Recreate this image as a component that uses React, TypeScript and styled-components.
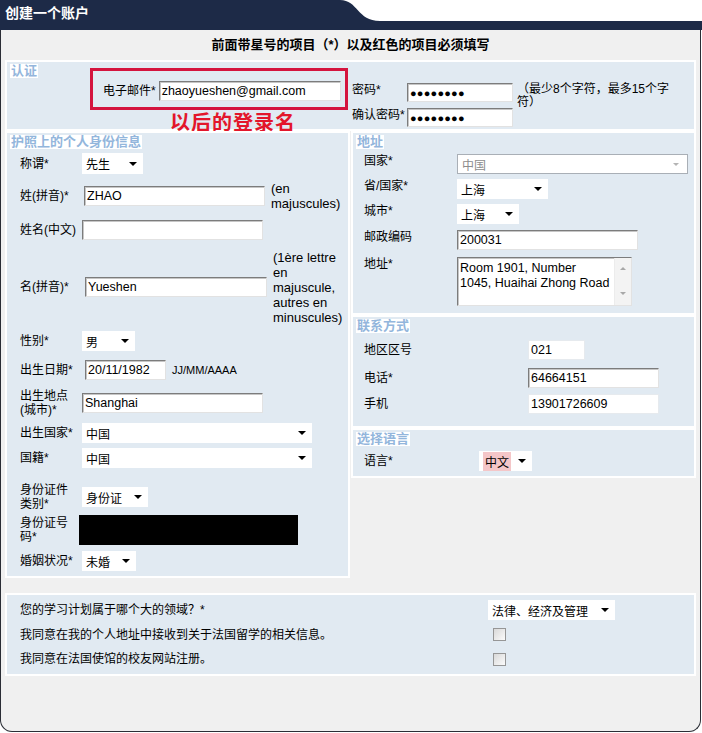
import styled, { createGlobalStyle } from "styled-components"

const navy = "#1d2a47"
const paleBlue = "#e1eaf2"

const GlobalStyle = createGlobalStyle`
    html, body {
        margin: 0;
        padding: 0;
        background: #ffffff;
    }

    body {
        font-family: "Liberation Sans", "Noto Sans CJK SC", sans-serif;
        font-size: 12px;
        color: #000;
    }

    * {
        box-sizing: border-box;
    }
`

const Page = styled.div`
    width: 702px;
    height: 733px;
    overflow: hidden;
`

const Header = styled.header`
    display: flex;
    align-items: flex-end;
    height: 30px;
`

const Tab = styled.div`
    flex: none;
    width: 340px;
    height: 30px;
    padding-left: 5px;
    background: ${navy};
    color: #fff;
    font-size: 14px;
    font-weight: bold;
    line-height: 26px;
`

const Swoop = styled.svg`
    display: block;
    flex: none;
`

const HeaderBar = styled.div`
    flex: 1;
    height: 9px;
    background: ${navy};
`

const Frame = styled.div`
    width: 701px;
    height: 702px;
    padding: 0 4px;
    background: #f0f0f0;
    border: 1px solid #2a2d35;
    border-top: none;
    border-radius: 0 0 12px 12px;
`

const Notice = styled.h1`
    margin: 0;
    height: 30px;
    font-size: 13px;
    line-height: 30px;
    text-align: center;
`

const Section = styled.section<{ $h: number }>`
    height: ${p => p.$h}px;
    background: ${paleBlue};
    border: 2px solid #fff;
`

const Legend = styled.div`
    width: fit-content;
    margin: 2px 0 0 3px;
    padding: 0 1px;
    background: #fff;
    color: #93b6dc;
    font-size: 13px;
    font-weight: bold;
    line-height: 14px;
`

// auth block

const AuthSection = styled(Section)`
    display: flex;
`

const AuthLegendCol = styled.div`
    flex: none;
    width: 83px;
`

const EmailCol = styled.div`
    flex: none;
    width: 258px;
    padding-top: 6px;
`

const Highlight = styled.div`
    display: flex;
    align-items: center;
    gap: 3px;
    height: 42px;
    padding: 4px 0 0 10px;
    border: 3px solid #d4143e;
`

const Annotation = styled.div`
    margin: 3px 0 0 80px;
    color: #e3162b;
    font-size: 20px;
    font-weight: bold;
    line-height: 20px;
    letter-spacing: 1px;
    white-space: nowrap;
`

const PasswordGrid = styled.div`
    display: grid;
    grid-template-columns: 55px 110px 158px;
    grid-template-rows: 19px 19px;
    row-gap: 6px;
    margin-left: 4px;
    padding-top: 21px;
`

const Hint = styled.div`
    grid-column: 3;
    grid-row: 1 / span 2;
    font-size: 12px;
    line-height: 13px;
`

// form parts

const Label = styled.span`
    padding-right: 4px;
    font-size: 12px;
    line-height: 14px;
`

const InlineLabel = styled(Label)`
    padding-right: 0;
    white-space: nowrap;
`

const TextBox = styled.div<{ $w: number; $h?: number; $flat?: boolean; $shift?: number }>`
    display: flex;
    align-items: center;
    width: ${p => p.$w}px;
    height: ${p => p.$h ?? 20}px;
    margin-left: ${p => p.$shift ?? 0}px;
    padding: 0 2px;
    background: #fff;
    border: 1px solid;
    border-color: ${p => (p.$flat ? "#e6eaee" : "#7c7c7c #e2e2e2 #e2e2e2 #7c7c7c")};
    box-shadow: ${p => (p.$flat ? "none" : "inset 1px 1px 0 #c6c6c6")};
    font-size: 12.5px;
    white-space: nowrap;
    overflow: hidden;
`

const Dots = styled(TextBox)`
    font-size: 11px;
    letter-spacing: 0.2px;
`

const Select = styled.div<{ $w: number; $h?: number; $disabled?: boolean }>`
    display: flex;
    align-items: center;
    width: ${p => p.$w}px;
    height: ${p => p.$h ?? 20}px;
    padding: 0 ${p => (p.$disabled ? 8 : 6)}px 0 4px;
    background: #fff;
    border: ${p => (p.$disabled ? "1px solid #a9afb6" : "none")};
    color: ${p => (p.$disabled ? "#8c8c8c" : "#000")};
    font-size: 12px;
    white-space: nowrap;

    &::after {
        content: "";
        margin-left: auto;
        border-left: ${p => (p.$disabled ? 3 : 4)}px solid transparent;
        border-right: ${p => (p.$disabled ? 3 : 4)}px solid transparent;
        border-top: ${p => (p.$disabled ? 3 : 4)}px solid ${p => (p.$disabled ? "#b4b4b4" : "#000")};
    }
`

const Picked = styled.span`
    padding: 1px 2px;
    background: #f4c6c8;
`

const Note = styled.div<{ $small?: boolean }>`
    width: ${p => (p.$small ? "auto" : "76px")};
    margin-left: 6px;
    font-size: ${p => (p.$small ? 11 : 13)}px;
    line-height: 15px;
    white-space: ${p => (p.$small ? "nowrap" : "normal")};
`

const Redacted = styled.div`
    width: 219px;
    height: 30px;
    margin-left: -3px;
    background: #000;
`

const Rows = styled.div<{ $pad: number; $mt: number }>`
    margin-top: ${p => p.$mt}px;
    padding-left: ${p => p.$pad}px;
`

const FieldRow = styled.div<{ $h: number; $label: number; $top?: boolean; $mt?: number }>`
    display: grid;
    grid-template-columns: ${p => p.$label}px auto auto;
    justify-content: start;
    align-items: ${p => (p.$top ? "start" : "center")};
    height: ${p => p.$h}px;
    margin-top: ${p => p.$mt ?? 0}px;
`

const TextArea = styled.div`
    display: flex;
    width: 175px;
    height: 49px;
    background: #fff;
    border: 1px solid;
    border-color: #7c7c7c #e2e2e2 #e2e2e2 #7c7c7c;
    box-shadow: inset 1px 1px 0 #c6c6c6;
`

const AreaText = styled.div`
    flex: 1;
    padding: 3px 2px;
    font-size: 12.5px;
    line-height: 15px;
    white-space: nowrap;
`

const ScrollTrack = styled.div`
    flex: none;
    display: flex;
    flex-direction: column;
    justify-content: space-between;
    align-items: center;
    width: 17px;
    padding: 9px 0 10px;
    background: #f3f3f3;
    border-left: 1px solid #ececec;
`

const ScrollArrow = styled.span<{ $dir: "up" | "down" }>`
    border-left: 3px solid transparent;
    border-right: 3px solid transparent;
    ${p => (p.$dir === "up" ? "border-bottom" : "border-top")}: 3px solid #a8a8a8;
`

const Checkbox = styled.div`
    width: 13px;
    height: 13px;
    margin-left: 5px;
    border: 1px solid #969696;
    background: linear-gradient(135deg, #d9d9d9, #fbfbfb);
`

// layout

const Columns = styled.div`
    display: flex;
    align-items: flex-start;
    gap: 1px;
`

const PersonalSection = styled(Section)`
    flex: none;
    width: 345px;
`

const RightCol = styled.div`
    flex: 1;
    display: flex;
    flex-direction: column;
`

const BottomSection = styled(Section)`
    margin-top: 15px;
`

export default function App() {
    return (
        <Page>
            <GlobalStyle />
            <Header>
                <Tab>创建一个账户</Tab>
                <Swoop width="40" height="30" viewBox="0 0 40 30">
                    <path d="M0 0 C18 0 17 21 40 21 L40 30 L0 30 Z" fill={navy} />
                </Swoop>
                <HeaderBar />
            </Header>
            <Frame>
                <Notice>前面带星号的项目（*）以及红色的项目必须填写</Notice>

                <AuthSection $h={71}>
                    <AuthLegendCol>
                        <Legend>认证</Legend>
                    </AuthLegendCol>
                    <EmailCol>
                        <Highlight>
                            <InlineLabel>电子邮件*</InlineLabel>
                            <TextBox $w={182}>zhaoyueshen@gmail.com</TextBox>
                        </Highlight>
                        <Annotation>以后的登录名</Annotation>
                    </EmailCol>
                    <PasswordGrid>
                        <InlineLabel>密码*</InlineLabel>
                        <Dots $w={106} $h={19}>●●●●●●●●</Dots>
                        <Hint>（最少8个字符，最多15个字符）</Hint>
                        <InlineLabel>确认密码*</InlineLabel>
                        <Dots $w={106} $h={19}>●●●●●●●●</Dots>
                    </PasswordGrid>
                </AuthSection>

                <Columns>
                    <PersonalSection $h={447}>
                        <Legend>护照上的个人身份信息</Legend>
                        <Rows $pad={13} $mt={2}>
                            <FieldRow $h={25} $label={62}>
                                <Label>称谓*</Label>
                                <Select $w={61} $h={21}>先生</Select>
                            </FieldRow>
                            <FieldRow $h={40} $label={62}>
                                <Label>姓(拼音)*</Label>
                                <TextBox $w={181} $shift={2}>ZHAO</TextBox>
                                <Note>(en majuscules)</Note>
                            </FieldRow>
                            <FieldRow $h={28} $label={62}>
                                <Label>姓名(中文)</Label>
                                <TextBox $w={181} />
                            </FieldRow>
                            <FieldRow $h={86} $label={62}>
                                <Label>名(拼音)*</Label>
                                <TextBox $w={182} $shift={3}>Yueshen</TextBox>
                                <Note>(1ère lettre en majuscule, autres en minuscules)</Note>
                            </FieldRow>
                            <FieldRow $h={22} $label={62}>
                                <Label>性别*</Label>
                                <Select $w={53}>男</Select>
                            </FieldRow>
                            <FieldRow $h={36} $label={62}>
                                <Label>出生日期*</Label>
                                <TextBox $w={81} $shift={3}>20/11/1982</TextBox>
                                <Note $small>JJ/MM/AAAA</Note>
                            </FieldRow>
                            <FieldRow $h={30} $label={62}>
                                <Label>出生地点(城市)*</Label>
                                <TextBox $w={181}>Shanghai</TextBox>
                            </FieldRow>
                            <FieldRow $h={30} $label={62}>
                                <Label>出生国家*</Label>
                                <Select $w={230}>中国</Select>
                            </FieldRow>
                            <FieldRow $h={20} $label={62}>
                                <Label>国籍*</Label>
                                <Select $w={230}>中国</Select>
                            </FieldRow>
                            <FieldRow $h={30} $label={62} $mt={14}>
                                <Label>身份证件类别*</Label>
                                <Select $w={66}>身份证</Select>
                            </FieldRow>
                            <FieldRow $h={36} $label={62}>
                                <Label>身份证号码*</Label>
                                <Redacted />
                            </FieldRow>
                            <FieldRow $h={26} $label={62}>
                                <Label>婚姻状况*</Label>
                                <Select $w={54}>未婚</Select>
                            </FieldRow>
                        </Rows>
                    </PersonalSection>

                    <RightCol>
                        <Section $h={184}>
                            <Legend>地址</Legend>
                            <Rows $pad={11} $mt={5}>
                                <FieldRow $h={25} $label={93} $top>
                                    <Label>国家*</Label>
                                    <Select $w={231} $disabled>中国</Select>
                                </FieldRow>
                                <FieldRow $h={25} $label={93} $top>
                                    <Label>省/国家*</Label>
                                    <Select $w={91}>上海</Select>
                                </FieldRow>
                                <FieldRow $h={26} $label={93} $top>
                                    <Label>城市*</Label>
                                    <Select $w={62}>上海</Select>
                                </FieldRow>
                                <FieldRow $h={27} $label={93} $top>
                                    <Label>邮政编码</Label>
                                    <TextBox $w={181}>200031</TextBox>
                                </FieldRow>
                                <FieldRow $h={49} $label={93} $top>
                                    <Label>地址*</Label>
                                    <TextArea>
                                        <AreaText>
                                            Room 1901, Number
                                            <br />
                                            1045, Huaihai Zhong Road
                                        </AreaText>
                                        <ScrollTrack>
                                            <ScrollArrow $dir="up" />
                                            <ScrollArrow $dir="down" />
                                        </ScrollTrack>
                                    </TextArea>
                                </FieldRow>
                            </Rows>
                        </Section>

                        <Section $h={113}>
                            <Legend>联系方式</Legend>
                            <Rows $pad={11} $mt={3}>
                                <FieldRow $h={28} $label={164}>
                                    <Label>地区区号</Label>
                                    <TextBox $w={57} $flat>021</TextBox>
                                </FieldRow>
                                <FieldRow $h={28} $label={164}>
                                    <Label>电话*</Label>
                                    <TextBox $w={131}>64664151</TextBox>
                                </FieldRow>
                                <FieldRow $h={24} $label={164}>
                                    <Label>手机</Label>
                                    <TextBox $w={131} $flat>13901726609</TextBox>
                                </FieldRow>
                            </Rows>
                        </Section>

                        <Section $h={50}>
                            <Legend>选择语言</Legend>
                            <Rows $pad={11} $mt={2}>
                                <FieldRow $h={26} $label={115}>
                                    <Label>语言*</Label>
                                    <Select $w={53}>
                                        <Picked>中文</Picked>
                                    </Select>
                                </FieldRow>
                            </Rows>
                        </Section>
                    </RightCol>
                </Columns>

                <BottomSection $h={83}>
                    <Rows $pad={13} $mt={2}>
                        <FieldRow $h={26} $label={468}>
                            <Label>您的学习计划属于哪个大的领域？*</Label>
                            <Select $w={127}>法律、经济及管理</Select>
                        </FieldRow>
                        <FieldRow $h={23} $label={468}>
                            <Label>我同意在我的个人地址中接收到关于法国留学的相关信息。</Label>
                            <Checkbox />
                        </FieldRow>
                        <FieldRow $h={26} $label={468}>
                            <Label>我同意在法国使馆的校友网站注册。</Label>
                            <Checkbox />
                        </FieldRow>
                    </Rows>
                </BottomSection>
            </Frame>
        </Page>
    )
}
